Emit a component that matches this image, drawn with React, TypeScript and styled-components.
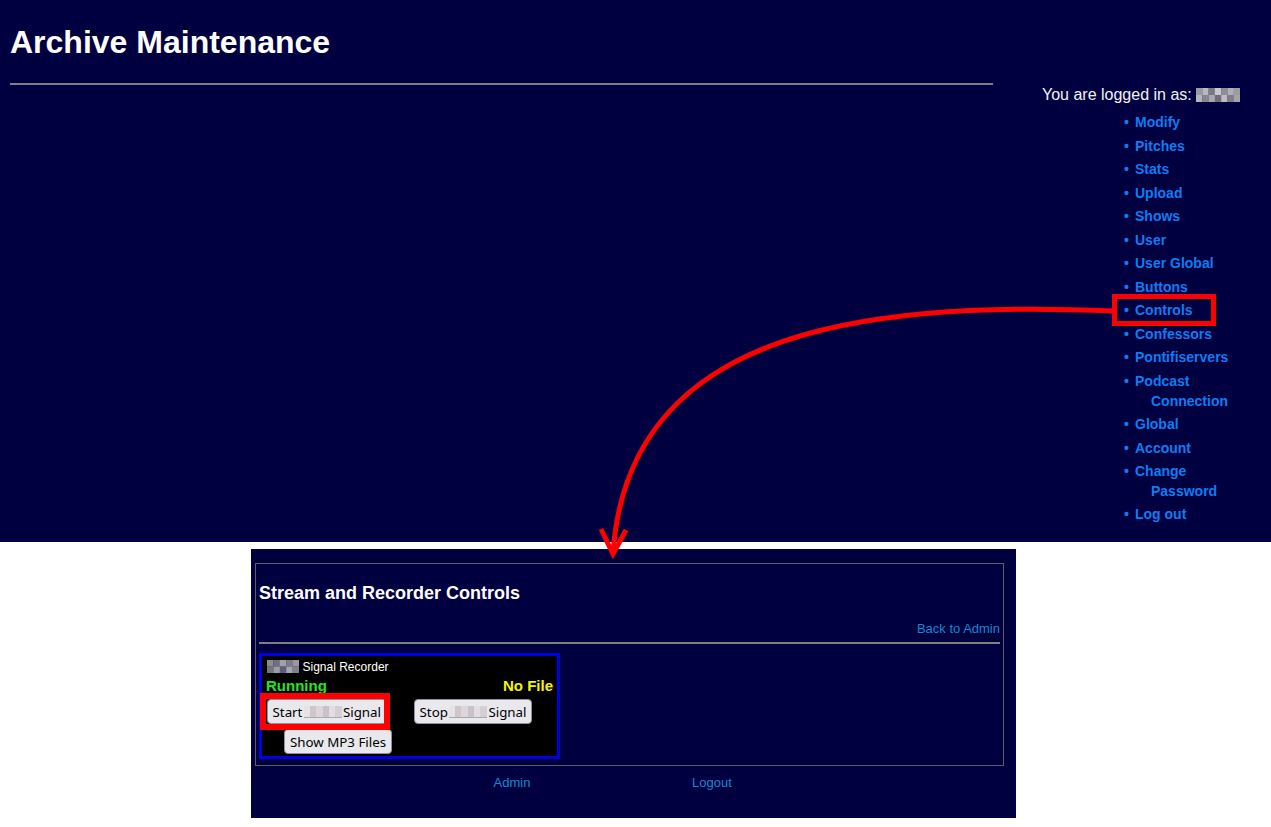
import React from "react";
import styled, { createGlobalStyle } from "styled-components";

const GlobalStyle = createGlobalStyle`
  html, body {
    margin: 0;
    padding: 0;
    background: #ffffff;
    font-family: "Liberation Sans", Arial, sans-serif;
  }
  * { box-sizing: border-box; }
`;

const NAVY = "#000040";

const Page = styled.div`
  position: relative;
  width: 100%;
  min-height: 827px;
  background: #ffffff;
  overflow: hidden;
`;

const Header = styled.header`
  display: flex;
  height: 542px;
  padding-left: 10px;
  background: ${NAVY};
`;

const MainCol = styled.div`
  width: 983px;
  flex: none;
`;

const Title = styled.h1`
  margin: 24px 0 22px;
  font-size: 32px;
  line-height: 37px;
  font-weight: bold;
  color: #ffffff;
`;

const Rule = styled.hr<{ $top?: number }>`
  margin: ${(p) => p.$top ?? 0}px 0 0;
  height: 0;
  border: none;
  border-top: 2px solid #808080;
`;

const SideCol = styled.aside`
  margin-left: 49px;
  padding-top: 86px;
  flex: none;
`;

const LoggedIn = styled.div`
  font-size: 16px;
  line-height: 18px;
  color: #f2f2f2;
  white-space: nowrap;
  svg {
    vertical-align: -2px;
  }
`;

const Menu = styled.ul`
  margin: 9px 0 0;
  padding-left: 93px;
  list-style: none;
`;

const MenuItem = styled.li`
  font-size: 14px;
  font-weight: bold;
  line-height: 19.5px;
  margin-bottom: 4.05px;
  color: #0d7df2;
  white-space: nowrap;
  &::before {
    content: "•";
    display: inline-block;
    width: 11px;
    margin-left: -11px;
  }
`;

const MenuLink = styled.a`
  color: #0d7df2;
  text-decoration: none;
`;

const WrapLine = styled.span`
  display: block;
  padding-left: 16px;
`;

const Panel = styled.section`
  width: 765px;
  height: 269px;
  margin: 7px 0 0 251px;
  padding: 14px 12px 0 4px;
  background: ${NAVY};
`;

const Frame = styled.div`
  height: 203px;
  border: 1px solid #5f5f5f;
  padding: 0 3px;
`;

const PanelTitle = styled.h2`
  margin: 19px 0 0;
  font-size: 18px;
  line-height: 21px;
  font-weight: bold;
  color: #ffffff;
`;

const BackRow = styled.div`
  margin-top: 17px;
  text-align: right;
  font-size: 13px;
  line-height: 15px;
`;

const PanelLink = styled.a`
  color: #1389d1;
  text-decoration: none;
  font-size: 13px;
`;

const Recorder = styled.div`
  margin-top: 9px;
  width: 301px;
  height: 106px;
  border: 3px solid #0000e0;
  background: #000000;
`;

const RecHead = styled.div`
  display: flex;
  align-items: flex-start;
  padding: 4px 0 0 5px;
  height: 21px;
  font-size: 12px;
  line-height: 12px;
  color: #ffffff;
  svg {
    flex: none;
    margin-right: 3.5px;
  }
`;

const HeadText = styled.span`
  padding-top: 1px;
`;

const StatusRow = styled.div`
  display: flex;
  justify-content: space-between;
  padding: 0 4px 0 4px;
  font-size: 15px;
  line-height: 17px;
  font-weight: bold;
`;

const Status = styled.span<{ $tone: "ok" | "warn" }>`
  color: ${(p) => (p.$tone === "ok" ? "#22e622" : "#f5f500")};
`;

const ButtonGrid = styled.div`
  display: grid;
  grid-template-columns: 152px 1fr;
  row-gap: 5px;
  margin-top: 5px;
`;

const Cell = styled.div<{ $align?: "left" | "center" }>`
  display: flex;
  justify-content: ${(p) => (p.$align === "center" ? "center" : "flex-start")};
  padding-left: ${(p) => (p.$align === "center" ? 0 : 5)}px;
`;

const StopCell = styled.div`
  display: flex;
`;

const Button = styled.button`
  display: inline-flex;
  align-items: center;
  height: 25px;
  padding: 0 4.5px;
  border: 1px solid #8f8f9d;
  border-radius: 4px;
  background: #e9e9ed;
  color: #000000;
  font-family: "Noto Sans", "DejaVu Sans", sans-serif;
  font-size: 13.33px;
  line-height: 16px;
  white-space: nowrap;
  cursor: pointer;
`;

const Blur = styled.span`
  display: inline-block;
  width: 38px;
  height: 12px;
  margin: 0 1px 0 1.5px;
  border-bottom: 1px solid #a8a8b0;
  background: linear-gradient(
    90deg,
    #e6e3e6 0 6px,
    #cfc6cc 6px 12px,
    #dcd5da 12px 19px,
    #c9c3c9 19px 25px,
    #e1dde1 25px 31px,
    #d4cfd4 31px 38px
  );
  vertical-align: middle;
`;

const Footer = styled.nav`
  display: grid;
  grid-template-columns: 200px 200px;
  margin: 9px 0 0 157px;
  font-size: 13px;
  line-height: 15px;
  text-align: center;
`;

const Overlay = styled.svg`
  position: absolute;
  top: 0;
  left: 0;
  pointer-events: none;
`;

type MosaicProps = { cols: string[][]; w: number; h: number };

const Mosaic: React.FC<MosaicProps> = ({ cols, w, h }) => {
  const rows = cols.length;
  const n = cols[0].length;
  const cw = w / n;
  const ch = h / rows;
  return (
    <svg width={w} height={h} viewBox={`0 0 ${w} ${h}`} aria-hidden="true">
      {cols.map((row, r) =>
        row.map((c, i) => (
          <rect key={`${r}-${i}`} x={i * cw} y={r * ch} width={cw + 0.2} height={ch + 0.2} fill={c} />
        ))
      )}
    </svg>
  );
};

const userMosaic = [
  ["#9a9aa4", "#b8b8be", "#7a7a86", "#c8c8cc", "#8e8e98", "#b0b0b6", "#9c9ca4"],
  ["#b4b4ba", "#868690", "#a8a8b0", "#6e6e7a", "#bcbcc2", "#7e7e88", "#a4a4ac"],
];

const recMosaic = [
  ["#8a8a96", "#6e6e86", "#a0a0a8", "#7c7c90", "#9898a4"],
  ["#75757f", "#9c9ca6", "#5e5e78", "#a6a6b0", "#80808e"],
];

const menuItems: string[][] = [
  ["Modify"],
  ["Pitches"],
  ["Stats"],
  ["Upload"],
  ["Shows"],
  ["User"],
  ["User Global"],
  ["Buttons"],
  ["Controls"],
  ["Confessors"],
  ["Pontifiservers"],
  ["Podcast", "Connection"],
  ["Global"],
  ["Account"],
  ["Change", "Password"],
  ["Log out"],
];

export default function App() {
  return (
    <>
      <GlobalStyle />
      <Page>
        <Header>
          <MainCol>
            <Title>Archive Maintenance</Title>
            <Rule />
          </MainCol>
          <SideCol>
            <LoggedIn>
              You are logged in as: <Mosaic cols={userMosaic} w={44} h={14} />
            </LoggedIn>
            <Menu>
              {menuItems.map((lines) => (
                <MenuItem key={lines.join(" ")}>
                  <MenuLink href="#">
                    {lines[0]}
                    {lines[1] && <WrapLine>{lines[1]}</WrapLine>}
                  </MenuLink>
                </MenuItem>
              ))}
            </Menu>
          </SideCol>
        </Header>

        <Panel>
          <Frame>
            <PanelTitle>Stream and Recorder Controls</PanelTitle>
            <BackRow>
              <PanelLink href="#">Back to Admin</PanelLink>
            </BackRow>
            <Rule $top={6} />
            <Recorder>
              <RecHead>
                <Mosaic cols={recMosaic} w={32} h={13} />
                <HeadText>Signal Recorder</HeadText>
              </RecHead>
              <StatusRow>
                <Status $tone="ok">Running</Status>
                <Status $tone="warn">No File</Status>
              </StatusRow>
              <ButtonGrid>
                <Cell>
                  <Button>
                    Start<Blur />Signal
                  </Button>
                </Cell>
                <StopCell>
                  <Button>
                    Stop<Blur />Signal
                  </Button>
                </StopCell>
                <Cell $align="center">
                  <Button>Show MP3 Files</Button>
                </Cell>
              </ButtonGrid>
            </Recorder>
          </Frame>
          <Footer>
            <PanelLink href="#">Admin</PanelLink>
            <PanelLink href="#">Logout</PanelLink>
          </Footer>
        </Panel>

        <Overlay width={1271} height={827} viewBox="0 0 1271 827">
          <rect x={1114.5} y={296.5} width={99} height={27} fill="none" stroke="#ff0000" strokeWidth={5} />
          <rect x={263} y={696} width={124} height={31} fill="none" stroke="#ff0000" strokeWidth={6} />
          <path
            d="M1113 311 C 850 300, 628 335, 613 553"
            fill="none"
            stroke="#ff0000"
            strokeWidth={5}
          />
          <polyline
            points="601,529 613,554 626,530"
            fill="none"
            stroke="#ff0000"
            strokeWidth={5}
            strokeLinejoin="miter"
          />
        </Overlay>
      </Page>
    </>
  );
}
